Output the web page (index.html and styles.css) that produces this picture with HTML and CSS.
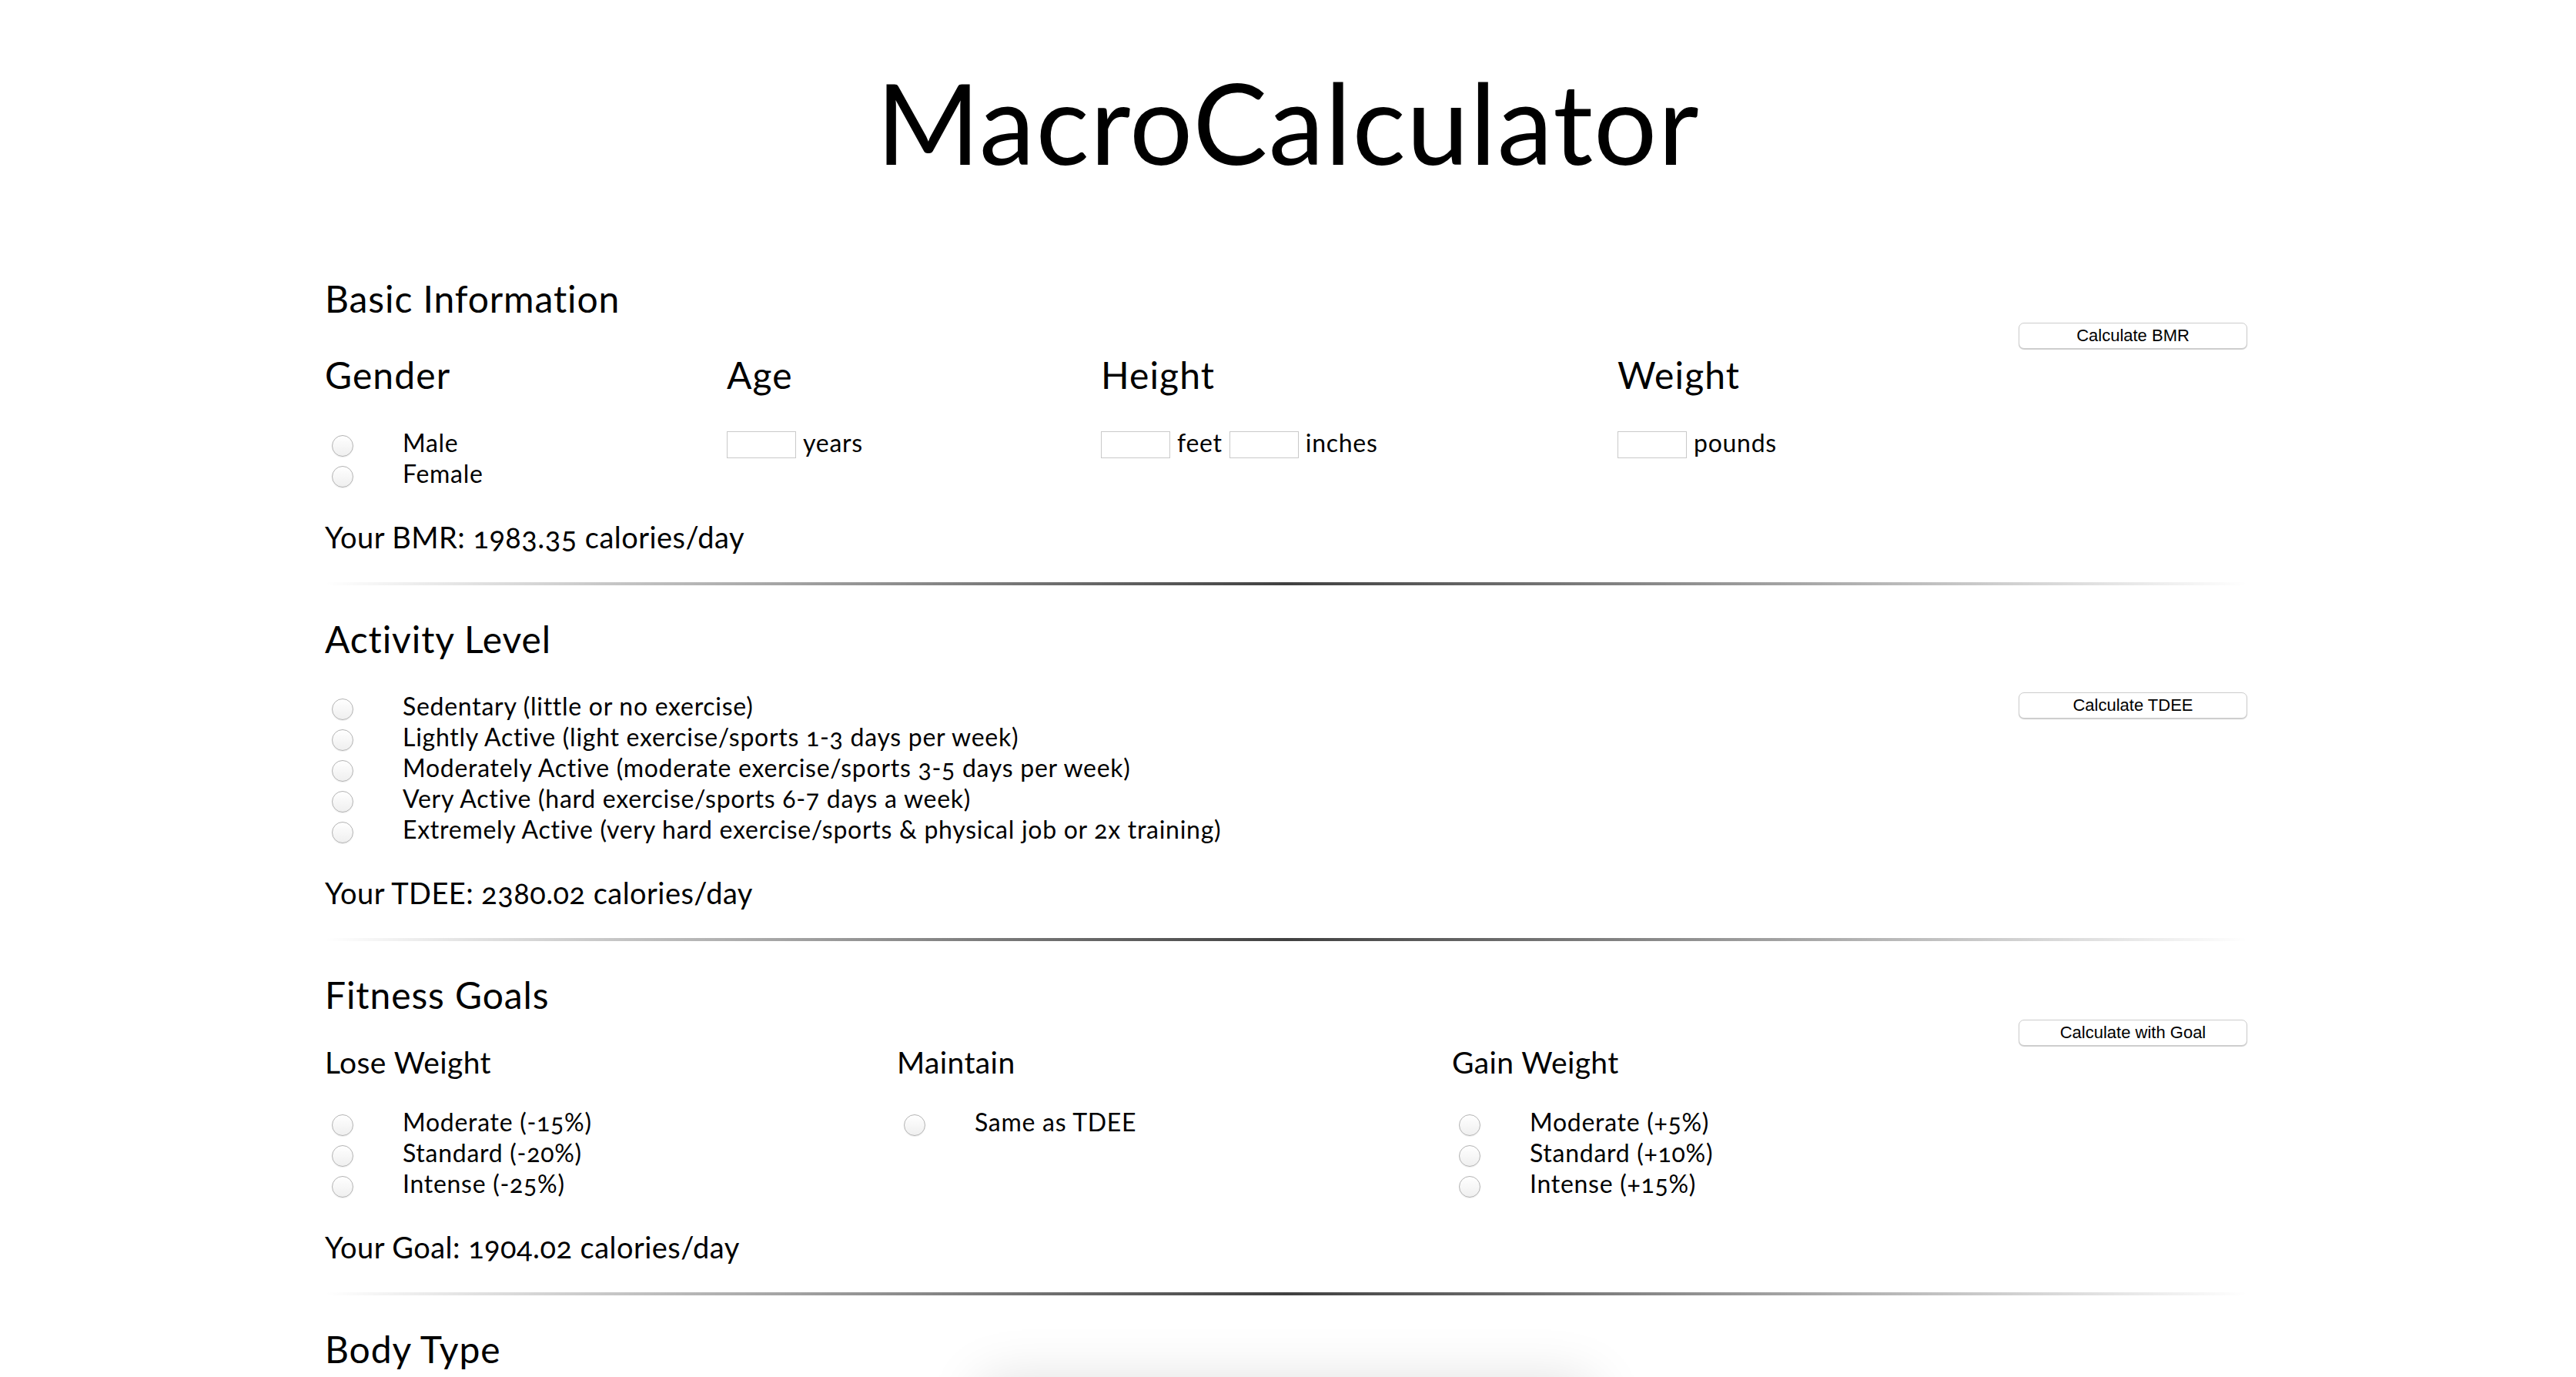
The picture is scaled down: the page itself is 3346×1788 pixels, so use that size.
FILE: index.html
```html
<!DOCTYPE html>
<html lang="en">
<head>
<meta charset="utf-8">
<title>MacroCalculator</title>
<link rel="stylesheet" href="styles.css">
</head>
<body>
<h1 class="title">MacroCalculator</h1>
<main class="page">
  <section class="section">
    <h2 class="section-title section-title--first">Basic Information</h2>
    <div class="row row-basic">
      <div class="col">
        <h3 class="field-title">Gender</h3>
        <label class="option"><input class="radio" type="radio" name="gender"><span>Male</span></label>
        <label class="option"><input class="radio" type="radio" name="gender"><span>Female</span></label>
      </div>
      <div class="col">
        <h3 class="field-title">Age</h3>
        <div class="inputs"><input class="num" type="text"><span>years</span></div>
      </div>
      <div class="col">
        <h3 class="field-title">Height</h3>
        <div class="inputs"><input class="num" type="text"><span>feet</span><input class="num" type="text"><span>inches</span></div>
      </div>
      <div class="col">
        <h3 class="field-title">Weight</h3>
        <div class="inputs"><input class="num" type="text"><span>pounds</span></div>
      </div>
      <div class="col col-btn"><button class="btn" type="button">Calculate BMR</button></div>
    </div>
    <p class="result">Your BMR: 1983.35 calories/day</p>
  </section>
  <hr class="divider">

  <section class="section">
    <h2 class="section-title">Activity Level</h2>
    <div class="row row-activity">
      <div class="col">
        <label class="option"><input class="radio" type="radio" name="activity"><span>Sedentary (little or no exercise)</span></label>
        <label class="option"><input class="radio" type="radio" name="activity"><span>Lightly Active (light exercise/sports 1-3 days per week)</span></label>
        <label class="option"><input class="radio" type="radio" name="activity"><span>Moderately Active (moderate exercise/sports 3-5 days per week)</span></label>
        <label class="option"><input class="radio" type="radio" name="activity"><span>Very Active (hard exercise/sports 6-7 days a week)</span></label>
        <label class="option"><input class="radio" type="radio" name="activity"><span>Extremely Active (very hard exercise/sports &amp; physical job or 2x training)</span></label>
      </div>
      <div class="col col-btn"><button class="btn btn--activity" type="button">Calculate TDEE</button></div>
    </div>
    <p class="result">Your TDEE: 2380.02 calories/day</p>
  </section>
  <hr class="divider">

  <section class="section">
    <h2 class="section-title">Fitness Goals</h2>
    <div class="row row-goals">
      <div class="col">
        <h4 class="goal-title">Lose Weight</h4>
        <label class="option"><input class="radio" type="radio" name="goal"><span>Moderate (-15%)</span></label>
        <label class="option"><input class="radio" type="radio" name="goal"><span>Standard (-20%)</span></label>
        <label class="option"><input class="radio" type="radio" name="goal"><span>Intense (-25%)</span></label>
      </div>
      <div class="col">
        <h4 class="goal-title">Maintain</h4>
        <label class="option"><input class="radio" type="radio" name="goal"><span>Same as TDEE</span></label>
      </div>
      <div class="col">
        <h4 class="goal-title">Gain Weight</h4>
        <label class="option"><input class="radio" type="radio" name="goal"><span>Moderate (+5%)</span></label>
        <label class="option"><input class="radio" type="radio" name="goal"><span>Standard (+10%)</span></label>
        <label class="option"><input class="radio" type="radio" name="goal"><span>Intense (+15%)</span></label>
      </div>
      <div class="col col-btn"><button class="btn btn--goal" type="button">Calculate with Goal</button></div>
    </div>
    <p class="result">Your Goal: 1904.02 calories/day</p>
  </section>
  <hr class="divider">

  <section class="section">
    <h2 class="section-title">Body Type</h2>
    <div class="body-card"></div>
  </section>
</main>
</body>
</html>
```
FILE: styles.css
```css
html {
  overflow: hidden;
}

body {
  margin: 0;
  background: #fff;
  color: #000;
  font-family: "Lato", "Open Sans", sans-serif;
  font-variant-numeric: oldstyle-nums;
}

.title {
  margin: 71px 0 0;
  text-align: center;
  font-size: 145px;
  line-height: 174px;
  font-weight: 400;
  letter-spacing: 1.3px;
}

.page {
  width: 2497px;
  margin-left: 422px;
}

.section-title {
  margin: 41px 0 2px;
  font-size: 48px;
  line-height: 58px;
  font-weight: 400;
  letter-spacing: 0.9px;
}

.section-title--first {
  margin-top: 114px;
}

.row {
  display: grid;
  align-items: start;
}

.row-basic {
  grid-template-columns: 522px 486px 671px 521px 297px;
}

.row-activity {
  grid-template-columns: 1fr 297px;
  margin-top: 38px;
  margin-bottom: 5px;
}

.row-goals {
  grid-template-columns: 743px 721px 736px 297px;
}

.field-title {
  margin: 42px 0 42px;
  font-size: 48px;
  line-height: 52px;
  font-weight: 400;
  letter-spacing: 1.1px;
}

.goal-title {
  margin: 33px 0 35px;
  font-size: 39px;
  line-height: 46px;
  font-weight: 400;
  letter-spacing: 0.4px;
}

.option {
  display: flex;
  align-items: flex-start;
  font-size: 32px;
  line-height: 40px;
  letter-spacing: 0.72px;
}

.radio {
  appearance: none;
  -webkit-appearance: none;
  flex: none;
  box-sizing: border-box;
  width: 28px;
  height: 28px;
  margin: 10px 64px 0 9px;
  border: 1px solid #b3b3b3;
  border-radius: 50%;
  background: linear-gradient(#ffffff, #efefef);
  box-shadow: 0 1px 1px rgba(0, 0, 0, 0.07);
}

.inputs {
  display: flex;
  align-items: flex-start;
  gap: 9px;
  font-size: 32px;
  line-height: 40px;
  letter-spacing: 0.72px;
}

.num {
  box-sizing: border-box;
  width: 90px;
  height: 35px;
  margin: 5px 0 0;
  padding: 0;
  border: 1px solid #c9c9c9;
  background: #fff;
}

.btn {
  box-sizing: border-box;
  width: 297px;
  height: 34px;
  padding: 0;
  background: #fff;
  border: 1px solid #cccccc;
  border-radius: 7px;
  box-shadow: 0 1px 1px rgba(0, 0, 0, 0.2);
  color: #000;
  font-family: "Liberation Sans", Arial, sans-serif;
  font-size: 22px;
  line-height: 32px;
}

.btn--activity {
  margin-top: 2px;
}

.btn--goal {
  margin-top: 1px;
}

.result {
  margin: 42px 0 0;
  font-size: 38px;
  line-height: 40px;
  letter-spacing: 0.45px;
}

.divider {
  margin: 39px 0 0;
  height: 4px;
  border: 0;
  background: linear-gradient(to right, rgba(0, 0, 0, 0), rgba(0, 0, 0, 0.75), rgba(0, 0, 0, 0));
}

.body-card {
  width: 790px;
  height: 400px;
  margin: 14px auto 0;
  background: #fff;
  box-shadow: 0 0 70px rgba(0, 0, 0, 0.14);
}
```
